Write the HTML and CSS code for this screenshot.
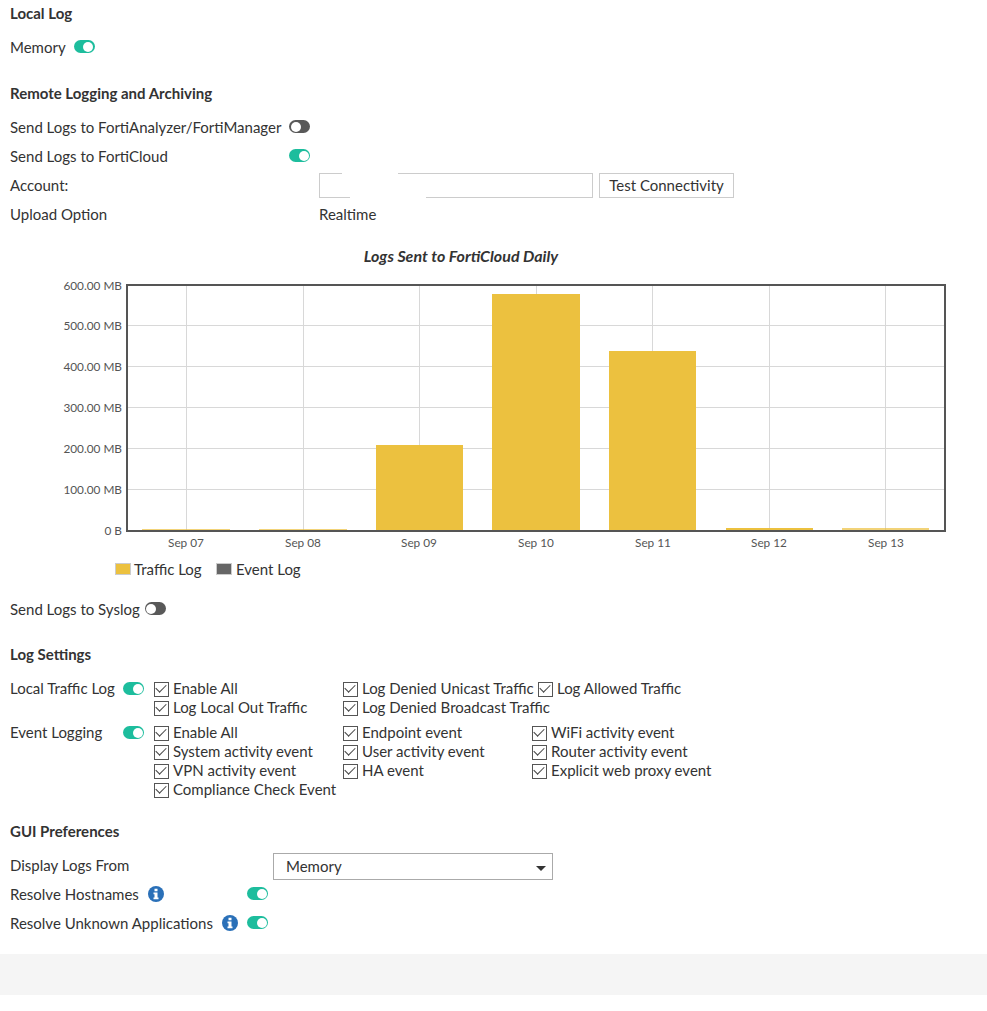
FILE: index.html
```html
<!DOCTYPE html>
<html lang="en">
<head>
<meta charset="utf-8">
<title>Log Settings</title>
<link rel="stylesheet" href="styles.css">
</head>
<body>
<main class="page">
  <h2 class="heading first">Local Log</h2>
  <div class="row"><span class="label">Memory</span><span class="toggle on gap8"></span></div>

  <h2 class="heading remote">Remote Logging and Archiving</h2>
  <div class="row"><span class="label w279">Send Logs to FortiAnalyzer/FortiManager</span><span class="toggle off"></span></div>
  <div class="row"><span class="label w279">Send Logs to FortiCloud</span><span class="toggle on"></span></div>
  <div class="row"><span class="label w309">Account:</span><span class="input"><i class="smudge top"></i><i class="smudge bottom"></i></span><span class="button">Test Connectivity</span></div>
  <div class="row"><span class="label w309">Upload Option</span><span class="label">Realtime</span></div>

  <div class="chart">
    <svg class="chart-svg" width="987" height="345" viewBox="0 0 987 345">
      <text class="title" x="461" y="25">Logs Sent to FortiCloud Daily</text>
      <g class="grid">
        <path d="M127 88.500H945M127 129.500H945M127 170.500H945M127 211.500H945M127 252.500H945"/>
        <path d="M186.500 48V294M303.500 48V294M419.500 48V294M536.500 48V294M652.500 48V294M769.500 48V294M885.500 48V294"/>
      </g>
      <g class="bars">
        <rect class="faint" x="142" y="292" width="88" height="1"/>
        <rect class="faint" x="259" y="292" width="88" height="1"/>
        <rect x="376" y="208" width="87" height="85"/>
        <rect x="492" y="57" width="88" height="236"/>
        <rect x="609" y="114" width="87" height="179"/>
        <rect x="726" y="291" width="87" height="2"/>
        <rect class="faint" x="842" y="291" width="87" height="2"/>
      </g>
      <path class="frame" d="M127 295V48H945V294H126"/>
      <g class="ylabels">
        <text x="122" y="53">600.00 MB</text>
        <text x="122" y="93">500.00 MB</text>
        <text x="122" y="134">400.00 MB</text>
        <text x="122" y="175">300.00 MB</text>
        <text x="122" y="216">200.00 MB</text>
        <text x="122" y="257">100.00 MB</text>
        <text x="122" y="298">0 B</text>
      </g>
      <g class="xlabels">
        <text x="186" y="310">Sep 07</text>
        <text x="303" y="310">Sep 08</text>
        <text x="419" y="310">Sep 09</text>
        <text x="536" y="310">Sep 10</text>
        <text x="653" y="310">Sep 11</text>
        <text x="769" y="310">Sep 12</text>
        <text x="886" y="310">Sep 13</text>
      </g>
      <rect class="swatch traffic" x="115.500" y="326.500" width="15" height="11"/>
      <text class="legend" x="134" y="338">Traffic Log</text>
      <rect class="swatch event" x="216.500" y="326.500" width="15" height="11"/>
      <text class="legend" x="236" y="338">Event Log</text>
    </svg>
  </div>

  <div class="row syslog"><span class="label">Send Logs to Syslog</span><span class="toggle off gap5"></span></div>

  <h2 class="heading settings">Log Settings</h2>
  <div class="option-group">
    <span class="label w113">Local Traffic Log</span><span class="toggle on"></span>
    <div class="options traffic-options">
      <span class="check">Enable All</span>
      <span class="check">Log Denied Unicast Traffic</span>
      <span class="check">Log Allowed Traffic</span>
      <span class="check">Log Local Out Traffic</span>
      <span class="check">Log Denied Broadcast Traffic</span>
    </div>
  </div>
  <div class="option-group event-group">
    <span class="label w113">Event Logging</span><span class="toggle on"></span>
    <div class="options event-options">
      <span class="check">Enable All</span>
      <span class="check">Endpoint event</span>
      <span class="check">WiFi activity event</span>
      <span class="check">System activity event</span>
      <span class="check">User activity event</span>
      <span class="check">Router activity event</span>
      <span class="check">VPN activity event</span>
      <span class="check">HA event</span>
      <span class="check">Explicit web proxy event</span>
      <span class="check">Compliance Check Event</span>
    </div>
  </div>

  <h2 class="heading gui">GUI Preferences</h2>
  <div class="row select-row"><span class="label w263">Display Logs From</span><span class="select">Memory<i class="caret"></i></span></div>
  <div class="row"><span class="label w138">Resolve Hostnames</span><svg class="info" width="16" height="16" viewBox="0 0 16 16"><circle class="info-disc" cx="8" cy="8" r="8"/><path class="info-mark" d="M6.500 2.800H9.500V5.300H6.500ZM5.500 6.500H9.500V11.500H10.500V13.200H5.500V11.500H6.500V8.200H5.500Z"/></svg><span class="toggle on gap83"></span></div>
  <div class="row"><span class="label w212">Resolve Unknown Applications</span><svg class="info" width="16" height="16" viewBox="0 0 16 16"><circle class="info-disc" cx="8" cy="8" r="8"/><path class="info-mark" d="M6.500 2.800H9.500V5.300H6.500ZM5.500 6.500H9.500V11.500H10.500V13.200H5.500V11.500H6.500V8.200H5.500Z"/></svg><span class="toggle on gap9"></span></div>
</main>
<footer class="footer"></footer>
</body>
</html>
```
FILE: styles.css
```css
* { box-sizing: border-box; }
html, body { margin: 0; padding: 0; background: #fff; }
body {
  width: 987px;
  height: 1011px;
  overflow: hidden;
  font: 15px/19px Lato, "Open Sans", sans-serif;
  color: #333;
}
.page { padding: 4px 0 0 10px; height: 954px; }
.heading { margin: 0; font-size: 15px; line-height: 19px; font-weight: 700; color: #333; }
.heading.first { margin-bottom: 10px; }
.heading.remote { margin-top: 22px; margin-bottom: 10px; }
.heading.settings { margin-top: 21px; margin-bottom: 15px; }
.heading.gui { margin-top: 23px; margin-bottom: 10px; }
.row { display: flex; align-items: center; height: 29px; }
.label { flex: none; }
.w279 { width: 279px; }
.w309 { width: 309px; }
.w113 { width: 113px; }
.w263 { width: 263px; }
.w138 { width: 138px; }
.w212 { width: 212px; }
.toggle {
  position: relative;
  flex: none;
  width: 21px;
  height: 13px;
  border-radius: 7px;
  margin-bottom: 2px;
}
.toggle::after {
  content: "";
  position: absolute;
  top: 1.500px;
  width: 10px;
  height: 10px;
  border-radius: 50%;
  background: #fff;
}
.toggle.on { background: #1dbd9d; }
.toggle.on::after { right: 1.500px; }
.toggle.off { background: #595959; }
.toggle.off::after { left: 1.500px; }
.gap8 { margin-left: 8px; }
.gap5 { margin-left: 5px; }
.gap9 { margin-left: 9px; }
.gap83 { margin-left: 83px; }
.input { position: relative; width: 274px; height: 25px; border: 1px solid #ccc; background: #fff; margin-right: 6px; }
.smudge { position: absolute; height: 2px; background: #fff; }
.smudge.top { left: 22px; top: -1px; width: 56px; }
.smudge.bottom { left: 30px; bottom: -1px; width: 76px; }
.button {
  width: 135px;
  height: 25px;
  border: 1px solid #ccc;
  line-height: 23px;
  text-align: center;
}
.chart { height: 345px; margin: 8px 0 0 -10px; }
.chart-svg { display: block; }
.title { font: italic 700 16px Lato, sans-serif; fill: #333; text-anchor: middle; }
.grid path { stroke: #d8d8d8; stroke-width: 1; fill: none; }
.bars rect { fill: #ecc13f; }
.bars .faint { opacity: .7; }
.frame { stroke: #555; stroke-width: 2; fill: none; }
.ylabels text { font: 11.800px Lato, sans-serif; fill: #555; text-anchor: end; }
.xlabels text { font: 11.800px Lato, sans-serif; fill: #555; text-anchor: middle; }
.swatch { stroke: #ccc; stroke-width: 1; }
.swatch.traffic { fill: #ecc13f; }
.swatch.event { fill: #666; }
.legend { font: 15px Lato, sans-serif; fill: #333; }
.syslog { margin-top: 13px; }
.option-group { display: flex; align-items: flex-start; }
.option-group > .toggle { margin-top: 3px; }
.event-group { margin-top: 6px; }
.options {
  display: grid;
  margin-left: 10px;
}
.traffic-options { grid-template-columns: 189px 195px max-content; }
.event-options { grid-template-columns: 189px 189px max-content; }
.check { position: relative; display: block; padding-left: 19px; white-space: nowrap; }
.check::before {
  content: "";
  position: absolute;
  left: 0;
  top: 3px;
  width: 13px;
  height: 13px;
  border: 1px solid #555;
  background: #fff;
}
.check::after {
  content: "";
  position: absolute;
  left: 2px;
  top: 5px;
  width: 9px;
  height: 5px;
  border-left: 1.500px solid #444;
  border-bottom: 1.500px solid #444;
  transform: rotate(-45deg);
}
.select {
  position: relative;
  width: 280px;
  height: 27px;
  margin-top: 2px;
  border: 1px solid #aaa;
  padding-left: 12px;
  line-height: 25px;
}
.caret {
  position: absolute;
  right: 6px;
  top: 12px;
  border-left: 5.500px solid transparent;
  border-right: 5.500px solid transparent;
  border-top: 5.500px solid #333;
}
.info { flex: none; margin-bottom: 2px; }
.info-disc { fill: #2a70b8; }
.info-mark { fill: #fff; }
.footer { height: 41px; background: #f5f5f5; }
```
